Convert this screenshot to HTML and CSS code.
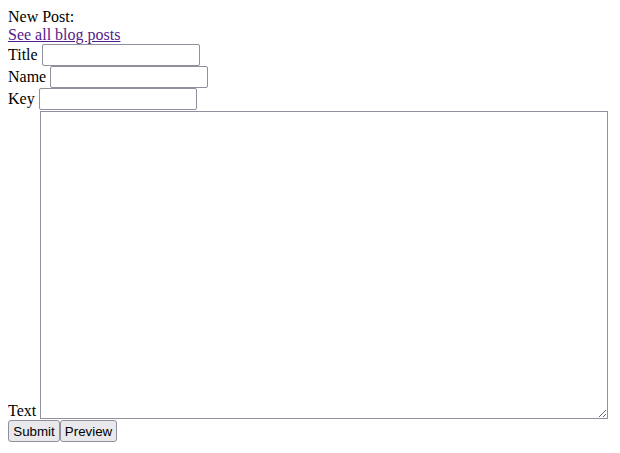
FILE: index.html
```html
<!DOCTYPE html>
<html lang="en">
<head>
    <meta charset="UTF-8">
    <title>New Post</title>
    <link rel="stylesheet" href="styles.css">
</head>
<body>
    <div class="post-header">New Post:</div>
    <a href="#" class="all-posts">See all blog posts</a>
    <form class="post-form">
        <div class="form-row"><label>Title</label><input type="text" name="title"></div>
        <div class="form-row"><label>Name</label><input type="text" name="name"></div>
        <div class="form-row"><label>Key</label><input type="text" name="key"></div>
        <div class="form-row text-row"><label>Text</label><textarea name="text" class="post-text"></textarea></div>
        <div class="form-buttons"><button type="submit" class="btn-submit">Submit</button><button type="button" class="btn-preview">Preview</button></div>
    </form>
</body>
</html>
```

FILE: styles.css
```css
body { margin: 8px; font-family: "Liberation Serif", "Times New Roman", serif; font-size: 16px; color: #000; background: #fff; }
.post-header { line-height: 18px; }
.all-posts { display: block; line-height: 18px; color: #551a8b; }
.post-form { margin: 0; }
.form-row { display: flex; align-items: center; gap: 4px; height: 22px; }
.form-row label { line-height: 18px; }
.form-row input { width: 158px; height: 22px; box-sizing: border-box; margin: 0; padding: 1px 2px; border: 1px solid #8f8f9d; border-radius: 2px; font-family: "Liberation Sans", Arial, sans-serif; font-size: 13.33px; }
.text-row { align-items: flex-end; height: auto; }
.post-text { width: 568px; height: 308px; box-sizing: border-box; margin: 1px 0 1px 0; border: 1px solid #8f8f9d; resize: both; }
.form-buttons { display: flex; }
.form-buttons button { height: 22px; box-sizing: border-box; margin: 0; padding: 1px 0; border: 1px solid #8f8f9d; border-radius: 3px; background: #e9e9ed; color: #000; font-family: "Liberation Sans", Arial, sans-serif; font-size: 13.33px; text-align: center; }
.btn-submit { width: 52px; }
.btn-preview { width: 57px; }
```
